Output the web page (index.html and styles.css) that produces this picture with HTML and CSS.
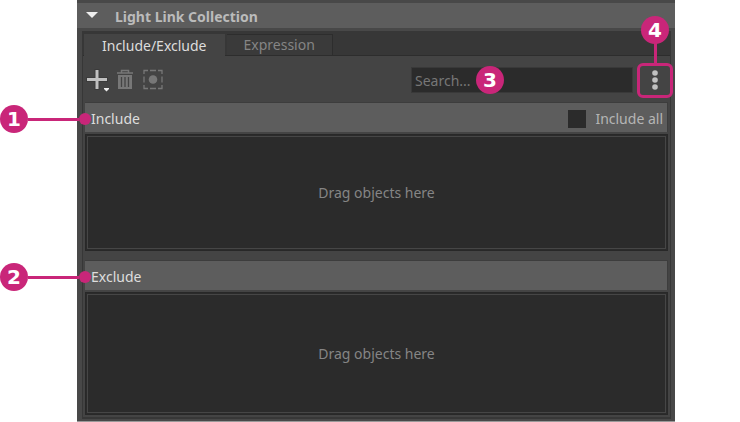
FILE: index.html
```html
<!DOCTYPE html>
<html lang="en">
<head>
<meta charset="utf-8">
<title>Light Link Collection</title>
<link rel="stylesheet" href="styles.css">
</head>
<body>
<main class="panel">
  <button class="title" type="button" aria-expanded="true">
    <svg width="12" height="7" viewBox="0 0 12 7" aria-hidden="true"><path d="M0 1h12L6 7z" fill="#eee"/></svg>
    <span>Light Link Collection</span>
  </button>
  <section class="body">
    <div class="tabs" role="tablist">
      <button class="tab active" type="button" role="tab" aria-selected="true">Include/Exclude</button>
      <button class="tab" type="button" role="tab" aria-selected="false">Expression</button>
    </div>
    <div class="content">
      <div class="toolbar">
        <button class="tool" type="button" aria-label="Add">
          <svg width="24" height="24" viewBox="0 0 24 24"><path d="M12 1v21M1 11.500h22" stroke="#303030" stroke-width="5" opacity=".4"/><path d="M12 2v19M2 11.500h20" stroke="#c0c0c0" stroke-width="3"/><path d="M19 20h5v1l-2.500 2.500L19 21z" fill="#eee"/></svg>
        </button>
        <button class="tool" type="button" aria-label="Delete">
          <svg width="24" height="24" viewBox="0 0 24 24"><path d="M4 5h16M8.500 5V2.500h7V5" stroke="#777" stroke-width="1.500" fill="none"/><path d="M5 7h14v14H5z" fill="#777"/><path d="M8.500 9v10M12 9v10M15.500 9v10" stroke="#444" stroke-width="1.300"/></svg>
        </button>
        <button class="tool" type="button" aria-label="Select">
          <svg width="24" height="24" viewBox="0 0 24 24"><circle cx="12" cy="11.500" r="4.300" fill="#777"/><path d="M3 6V2.500h4M9 2.500h6M17 2.500h4V6M21 8.500v6M21 17v3.500h-4M15 20.500H9M7 20.500H3V17M3 14.500v-6" stroke="#777" stroke-width="1.300" fill="none"/></svg>
        </button>
        <div class="search">
          <input type="text" placeholder="Search..." aria-label="Search">
          <span class="badge badge-search">3</span>
        </div>
        <div class="more">
          <button type="button" aria-label="More options">
            <svg width="8" height="22" viewBox="0 0 8 22"><g fill="#c0c0c0"><circle cx="4" cy="4" r="2.800"/><circle cx="4" cy="11" r="2.800"/><circle cx="4" cy="18" r="2.800"/></g></svg>
          </button>
          <span class="stem"></span>
          <span class="badge badge-more">4</span>
        </div>
      </div>
      <section class="group">
        <header class="head">
          <h2>Include</h2>
          <label class="all"><input type="checkbox">Include all</label>
          <div class="callout"><span class="badge">1</span><span class="line"></span><span class="dot"></span></div>
        </header>
        <div class="drop">Drag objects here</div>
      </section>
      <section class="group">
        <header class="head">
          <h2>Exclude</h2>
          <div class="callout"><span class="badge">2</span><span class="line"></span><span class="dot"></span></div>
        </header>
        <div class="drop tall">Drag objects here</div>
      </section>
    </div>
  </section>
</main>
</body>
</html>
```

FILE: styles.css
```css
* {
  box-sizing: border-box;
}

body {
  margin: 0;
  background: #fff;
  font: 14px/20px "Noto Sans", "Open Sans", sans-serif;
  color: #ddd;
}

button,
input {
  margin: 0;
  padding: 0;
  border: 0;
  font: inherit;
  color: inherit;
  background: none;
}

svg {
  display: block;
}

.panel {
  margin: 0 65px 0 77px;
  padding: 3px 0 2px;
  background: #484848;
  border-bottom: 1px solid #999;
}

.title {
  display: flex;
  align-items: center;
  gap: 17px;
  width: 100%;
  height: 25px;
  padding: 2px 9px 0;
  background: #5d5d5d;
  color: #bbb;
  font-weight: 700;
}

.title svg {
  margin-bottom: 4px;
}

.body {
  margin: 3px 4px 0 5px;
  border: solid #373737;
  border-width: 0 1px 2px;
  background: #444;
}

.tabs {
  display: flex;
  gap: 2px;
  padding: 3px 1px 0;
  background: #373737;
  border-bottom: 1px solid #2d2d2d;
}

.tab {
  height: 21px;
  padding: 0 17px;
  border: solid #2d2d2d;
  border-width: 1px 1px 0 0;
  background: #3a3a3a;
  color: #858585;
}

.tab.active {
  height: 22px;
  margin-bottom: -1px;
  padding: 0 17px 0 18px;
  border-color: #444;
  background: #444;
  color: #ddd;
}

.content {
  padding: 0 2px 2px;
}

.toolbar {
  display: flex;
  align-items: center;
  gap: 4px;
  height: 46px;
  padding-top: 2px;
}

.search {
  position: relative;
  flex: 0 1 222px;
  margin-left: auto;
}

.search input {
  display: block;
  width: 100%;
  height: 26px;
  padding: 0 3px;
  border: 1px solid #393939;
  background: #2b2b2b;
}

.search input::placeholder {
  color: #777;
  opacity: 1;
}

.badge {
  display: block;
  flex: none;
  width: 28px;
  height: 28px;
  border-radius: 50%;
  background: #c92679;
  color: #fff;
  font: 700 20px/28px "DejaVu Sans", sans-serif;
  text-align: center;
}

.badge-search {
  position: absolute;
  left: 65px;
  top: -1px;
}

.more {
  position: relative;
  flex: none;
  margin-right: -5px;
}

.more button {
  display: grid;
  place-items: center;
  width: 36px;
  height: 35px;
  border: 3px solid #c92679;
  border-radius: 6px;
}

.stem {
  position: absolute;
  left: 17px;
  top: -22px;
  width: 3px;
  height: 24px;
  background: #c92679;
}

.badge-more {
  position: absolute;
  left: 4px;
  top: -47px;
}

.group + .group {
  margin-top: 9px;
}

.head {
  position: relative;
  display: flex;
  align-items: center;
  justify-content: space-between;
  height: 30px;
  padding: 2px 4px 0 6px;
  border: 1px solid #3d3d3d;
  border-width: 1px 1px 0 0;
  background: #5d5d5d;
}

.head h2 {
  margin: 0;
  font-size: 14px;
  font-weight: 400;
}

.all {
  display: flex;
  align-items: center;
  gap: 9px;
  color: #b5b5b5;
}

.all input {
  appearance: none;
  width: 18px;
  height: 18px;
  background: #2b2b2b;
}

.callout {
  position: absolute;
  left: -85px;
  top: 2px;
  display: flex;
  align-items: center;
  width: 91px;
}

.line {
  flex: 1;
  height: 3px;
  background: #c92679;
}

.dot {
  width: 12px;
  height: 12px;
  border-radius: 50%;
  background: #c92679;
}

.drop {
  display: grid;
  place-items: center;
  min-height: 117px;
  margin-top: 2px;
  border: 1px solid #282828;
  outline: 1px solid #464646;
  outline-offset: -3px;
  background: #2b2b2b;
  color: #858585;
}

.drop.tall {
  min-height: 123px;
}
```
